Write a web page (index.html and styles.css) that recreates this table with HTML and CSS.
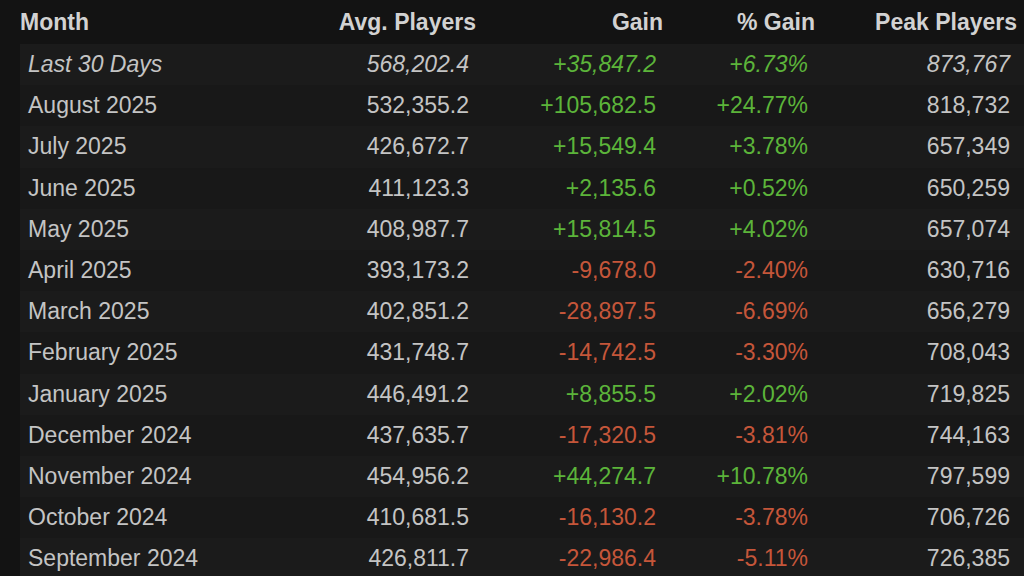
FILE: index.html
```html
<!DOCTYPE html>
<html>
<head>
<meta charset="utf-8">
<link rel="stylesheet" href="styles.css">
</head>
<body>
<div class="table">
  <div class="row head">
    <div class="c month">Month</div>
    <div class="c">Avg. Players</div>
    <div class="c">Gain</div>
    <div class="c">% Gain</div>
    <div class="c">Peak Players</div>
  </div>
  <div class="row odd italic">
    <div class="c month">Last 30 Days</div>
    <div class="c">568,202.4</div>
    <div class="c up">+35,847.2</div>
    <div class="c up">+6.73%</div>
    <div class="c">873,767</div>
  </div>
  <div class="row">
    <div class="c month">August 2025</div>
    <div class="c">532,355.2</div>
    <div class="c up">+105,682.5</div>
    <div class="c up">+24.77%</div>
    <div class="c">818,732</div>
  </div>
  <div class="row odd">
    <div class="c month">July 2025</div>
    <div class="c">426,672.7</div>
    <div class="c up">+15,549.4</div>
    <div class="c up">+3.78%</div>
    <div class="c">657,349</div>
  </div>
  <div class="row">
    <div class="c month">June 2025</div>
    <div class="c">411,123.3</div>
    <div class="c up">+2,135.6</div>
    <div class="c up">+0.52%</div>
    <div class="c">650,259</div>
  </div>
  <div class="row odd">
    <div class="c month">May 2025</div>
    <div class="c">408,987.7</div>
    <div class="c up">+15,814.5</div>
    <div class="c up">+4.02%</div>
    <div class="c">657,074</div>
  </div>
  <div class="row">
    <div class="c month">April 2025</div>
    <div class="c">393,173.2</div>
    <div class="c down">-9,678.0</div>
    <div class="c down">-2.40%</div>
    <div class="c">630,716</div>
  </div>
  <div class="row odd">
    <div class="c month">March 2025</div>
    <div class="c">402,851.2</div>
    <div class="c down">-28,897.5</div>
    <div class="c down">-6.69%</div>
    <div class="c">656,279</div>
  </div>
  <div class="row">
    <div class="c month">February 2025</div>
    <div class="c">431,748.7</div>
    <div class="c down">-14,742.5</div>
    <div class="c down">-3.30%</div>
    <div class="c">708,043</div>
  </div>
  <div class="row odd">
    <div class="c month">January 2025</div>
    <div class="c">446,491.2</div>
    <div class="c up">+8,855.5</div>
    <div class="c up">+2.02%</div>
    <div class="c">719,825</div>
  </div>
  <div class="row">
    <div class="c month">December 2024</div>
    <div class="c">437,635.7</div>
    <div class="c down">-17,320.5</div>
    <div class="c down">-3.81%</div>
    <div class="c">744,163</div>
  </div>
  <div class="row odd">
    <div class="c month">November 2024</div>
    <div class="c">454,956.2</div>
    <div class="c up">+44,274.7</div>
    <div class="c up">+10.78%</div>
    <div class="c">797,599</div>
  </div>
  <div class="row">
    <div class="c month">October 2024</div>
    <div class="c">410,681.5</div>
    <div class="c down">-16,130.2</div>
    <div class="c down">-3.78%</div>
    <div class="c">706,726</div>
  </div>
  <div class="row odd">
    <div class="c month">September 2024</div>
    <div class="c">426,811.7</div>
    <div class="c down">-22,986.4</div>
    <div class="c down">-5.11%</div>
    <div class="c">726,385</div>
  </div>
</div>
</body>
</html>
```

FILE: styles.css
```css
html, body {
  margin: 0;
  padding: 0;
  background: #131313;
  width: 1024px;
  height: 576px;
  overflow: hidden;
}
body {
  font-family: "Liberation Sans", Arial, sans-serif;
  font-size: 23px;
  color: #c4c4c4;
}
.table {
  margin-left: 20px;
  width: 1004px;
  display: flex;
  flex-direction: column;
}
.row {
  display: grid;
  grid-template-columns: 263px 200px 187px 152px 202px;
  height: 41.2px;
  align-items: center;
  background: #181818;
}
.row.odd {
  background: #1b1b1b;
}
.row .c {
  text-align: right;
  padding-right: 14px;
  white-space: nowrap;
}
.row .c.month {
  text-align: left;
  padding-left: 8px;
  padding-right: 0;
}
.row.head {
  height: 44px;
  background: #131313;
  font-weight: bold;
  color: #d2d2d2;
}
.row.head .c {
  padding-right: 7px;
}
.row.head .c.month {
  padding-left: 0;
}
.italic {
  font-style: italic;
}
.up {
  color: #5cb43a;
}
.down {
  color: #c5563a;
}
```
